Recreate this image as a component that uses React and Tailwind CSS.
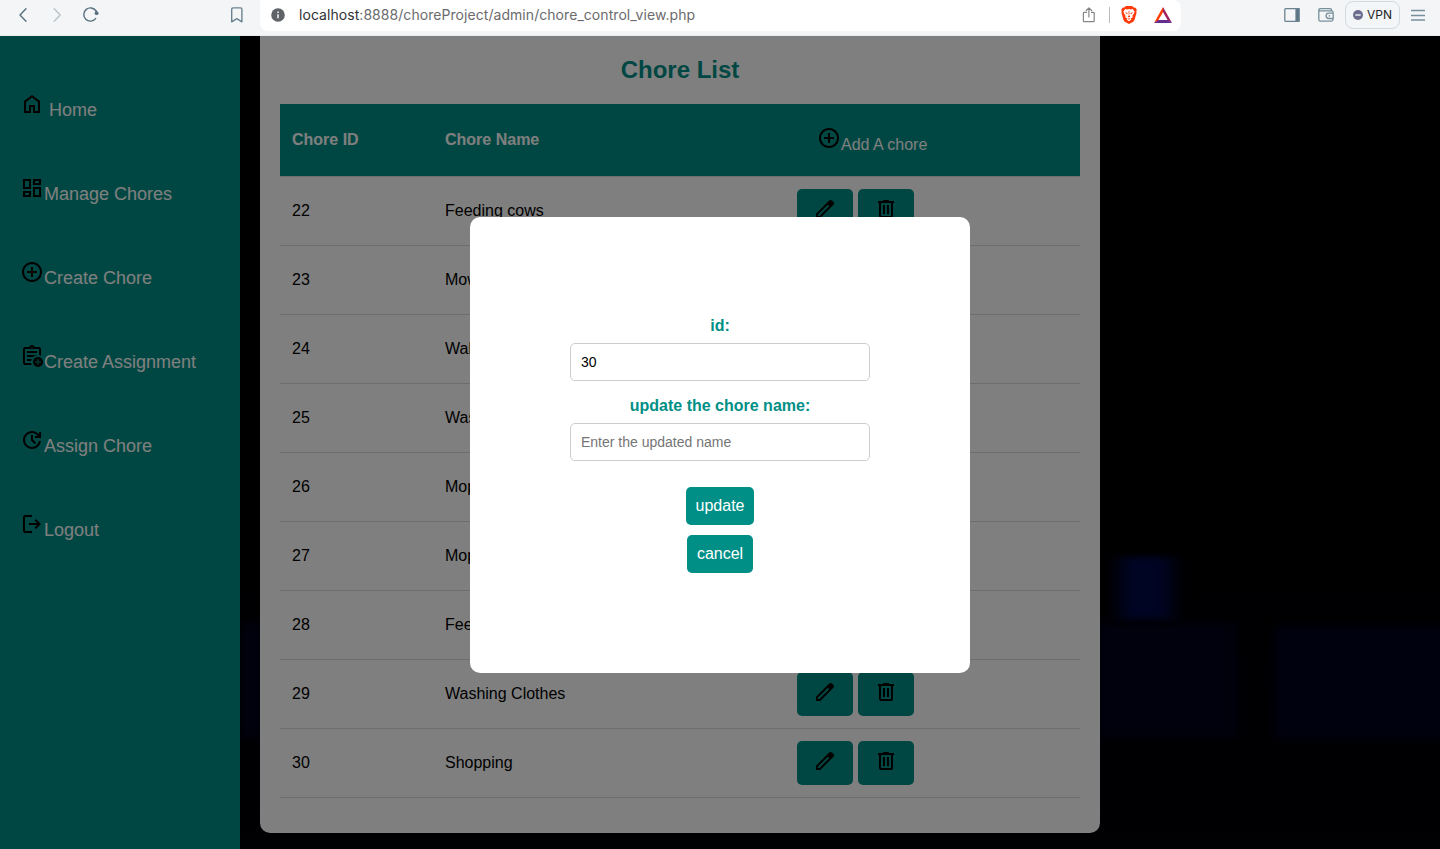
import React from "react";

const PATHS = {
  home: "M240-200h120v-240h240v240h120v-360L480-740 240-560v360Zm-80 80v-480l320-240 320 240v480H520v-240h-80v240H160Z",
  dashboard:
    "M520-600v-240h320v240H520ZM120-440v-400h320v400H120Zm400 320v-400h320v400H520Zm-400 0v-240h320v240H120Zm80-400h160v-240H200v240Zm400 320h160v-240H600v240Zm0-480h160v-80H600v80ZM200-200h160v-80H200v80Z",
  add: "M440-280h80v-160h160v-80H520v-160h-80v160H280v80h160v160Zm40 200q-83 0-156-31.5T197-197q-54-54-85.5-127T80-480q0-83 31.5-156T197-763q54-54 127-85.5T480-880q83 0 156 31.5T763-763q54 54 85.5 127T880-480q0 83-31.5 156T763-197q-54 54-127 85.5T480-80Zm0-80q134 0 227-93t93-227q0-134-93-227t-227-93q-134 0-227 93t-93 227q0 134 93 227t227 93Z",
  assignment:
    "M200-120q-33 0-56.5-23.5T120-200v-560q0-33 23.5-56.5T200-840h168q13-36 43.5-58t68.5-22q38 0 68.5 22t43.5 58h168q33 0 56.5 23.5T840-760v268q-19-9-39-15.5t-41-9.5v-243H200v560h242q3 22 9.5 42t15.5 38H200Zm80-160h163q3-21 9.5-41t14.5-39H280v80Zm0-160h244q32-30 71.5-50t84.5-27v-3H280v80Zm0-160h400v-80H280v80Zm200-190q13 0 21.5-8.5T510-820q0-13-8.5-21.5T480-850q-13 0-21.5 8.5T450-820q0 13 8.5 21.5T480-790ZM720-40q-83 0-141.5-58.5T520-240q0-83 58.5-141.5T720-440q83 0 141.5 58.5T920-240q0 83-58.5 141.5T720-40Zm-20-80h40v-100h100v-40H740v-100h-40v100H600v40h100v100Z",
  update:
    "M480-120q-75 0-140.5-28.5t-114-77q-48.5-48.5-77-114T120-480q0-75 28.5-140.5t77-114q48.5-48.5 114-77T480-840q82 0 155.5 35T760-706v-94h80v240H600v-80h110q-41-56-101-88t-129-32q-117 0-198.5 81.5T200-480q0 117 81.5 198.5T480-200q105 0 183.5-68T756-440h82q-15 137-117.5 228.5T480-120Zm112-192L440-464v-216h80v184l128 128-56 56Z",
  logout:
    "M200-120q-33 0-56.5-23.5T120-200v-560q0-33 23.5-56.5T200-840h280v80H200v560h280v80H200Zm440-160-55-58 102-102H360v-80h327L585-622l55-58 200 200-200 200Z",
  edit: "M200-200h57l391-391-57-57-391 391v57Zm-80 80v-170l528-527q12-11 26.5-17t30.5-6q16 0 31 6t26 18l55 56q12 11 17.5 26t5.5 30q0 16-5.5 30.5T817-647L290-120H120Z",
  trash:
    "M280-120q-33 0-56.5-23.5T200-200v-520h-40v-80h200v-40h240v40h200v80h-40v520q0 33-23.5 56.5T680-120H280Zm400-600H280v520h400v-520ZM360-280h80v-360h-80v360Zm160 0h80v-360h-80v360ZM280-720v520-520Z",
};

function Symbol({ name }) {
  return (
    <svg viewBox="0 -960 960 960" className="h-6 w-6 shrink-0 fill-black">
      <path d={PATHS[name]} />
    </svg>
  );
}

const NAV = [
  ["home", "Home"],
  ["dashboard", "Manage Chores"],
  ["add", "Create Chore"],
  ["assignment", "Create Assignment"],
  ["update", "Assign Chore"],
  ["logout", "Logout"],
];

const CHORES = [
  [22, "Feeding cows"],
  [23, "Mowing"],
  [24, "Walking dog"],
  [25, "Washing car"],
  [26, "Mopping"],
  [27, "Mopping"],
  [28, "Feeding"],
  [29, "Washing Clothes"],
  [30, "Shopping"],
];

function BrowserBar() {
  return (
    <header className="flex h-9 shrink-0 items-start border-b border-[#e9ebed] bg-[#f3f5f7] font-[Inter,sans-serif]">
      <div className="flex w-[260px] shrink-0 items-center pl-4 pt-[7px]">
        <svg viewBox="0 0 16 16" className="h-4 w-4" fill="none" stroke="#56717f" strokeWidth="1.4" strokeLinecap="round" strokeLinejoin="round">
          <path d="M10 1.7 4 8l6 6.3" />
        </svg>
        <svg viewBox="0 0 16 16" className="ml-[17px] h-4 w-4" fill="none" stroke="#b9c4ca" strokeWidth="1.4" strokeLinecap="round" strokeLinejoin="round">
          <path d="M5.2 1.7 11.2 8l-6 6.3" />
        </svg>
        <svg viewBox="0 0 16 16" className="ml-[18px] h-4 w-4" fill="none" stroke="#56717f" strokeWidth="1.4" strokeLinecap="round">
          <path d="M12.6 11.6A6.600 6.600 0 1 1 13 4" />
          <circle cx="13.600" cy="6.200" r="1.900" fill="#56717f" stroke="none" />
          <path d="M14 6 12.700 3.400" />
        </svg>
        <svg viewBox="0 0 16 16" className="ml-[130px] h-4 w-4" fill="none" stroke="#6b8390" strokeWidth="1.4" strokeLinejoin="round">
          <path d="M2.7 2.2Q2.7.9 4 .9h7.600q1.300 0 1.300 1.300v12.600L7.800 11.600l-5.100 3.200Z" />
        </svg>
      </div>
      <div className="flex h-[31px] w-[921px] shrink-0 items-center rounded-b-lg rounded-tr-lg bg-white pb-px pl-[11px]">
        <svg viewBox="0 0 14 14" className="h-3.5 w-3.5">
          <circle cx="7" cy="7" r="6.800" fill="#5f6368" />
          <path d="M6.300 6.300h1.400v4H6.300zM6.300 3.500h1.400V5H6.300z" fill="#fff" />
        </svg>
        <div className="ml-3.5 w-[783px] whitespace-nowrap text-[14px] leading-5 tracking-[0.055px] text-[#6b6b6d]">
          <span className="text-[#303134]">localhost</span>:8888/choreProject/admin/chore_control_view.php
        </div>
        <svg viewBox="0 0 14 16" className="h-4 w-3.5" fill="none" stroke="#858585" strokeWidth="1.2" strokeLinecap="round" strokeLinejoin="round">
          <path d="M4.500 5.400H2.200q-.8 0-.8.8v7.700q0 .8.8.8h9.200q.8 0 .8-.8V6.200q0-.8-.8-.8H9.500M6.900 10V1M4.200 3.500 6.900.9l2.700 2.600" />
        </svg>
        <div className="ml-[13px] h-4 w-px bg-[#b8bcc0]" />
        <svg viewBox="0 0 16 18" className="ml-[11px] h-[18px] w-4">
          <path d="M4.800 0h6.400l1.600 1.500 1.700.2 1.300 2-.5 1.700.3 1-2 7.300q-.5 1.400-1.700 2.200L8 18l-3.900-2.100q-1.200-.8-1.700-2.200L.4 6.400l.3-1L.2 3.700l1.300-2 1.700-.2Z" fill="#ff3b0b" />
          <path d="m4.300 3 2 .4L8 3l1.700.4 2-.4 1.900 2.400-.7 2.100-1.500 2.300.3 1.500-2 1.100.7 1L8 15.200l-2.400-1.800.7-1-2-1.100.3-1.500-1.500-2.300-.7-2.100Z" fill="#fff" />
          <path d="m3.800 6.300 3 .8-.9 1.200ZM12.200 6.300l-3 .8.9 1.200ZM7.600 5h.8l-.1 4.800 1.100.6L8 11.400l-1.400-1 1.100-.6ZM6.300 12.900l1.700-.6 1.700.6-1.700.7Z" fill="#ff3b0b" />
        </svg>
        <svg viewBox="0 0 18 16" className="ml-[17px] h-4 w-[18px]">
          <path d="M9 0 0 16l4.300-2.800L9 5Z" fill="#ff3d00" />
          <path d="M9 0v5l4.700 8.200L18 16Z" fill="#9e1f63" />
          <path d="M0 16h18l-4.300-2.900H4.300Z" fill="#662d91" />
        </svg>
      </div>
      <div className="flex flex-1 items-center pl-[103px]">
        <svg viewBox="0 0 16 16" className="mt-px h-4 w-4" fill="none" stroke="#6b8390" strokeWidth="1.300">
          <rect x=".8" y="1.700" width="14.200" height="12.600" rx=".8" />
          <path d="M12 1.700h3v12.600h-3Z" fill="#56717f" />
        </svg>
        <svg viewBox="0 0 16 16" className="ml-[18px] mt-px h-4 w-4" fill="none" stroke="#78909c" strokeWidth="1.300" strokeLinejoin="round">
          <path d="M15 5.800V4.900q0-1.100-1-1.100H2.300Q.8 3.800.8 2.700q0-1.100 1.200-1.100h10.300q1.100 0 1.100 1.100v1.100M.8 2.700v9.700q0 1.700 1.700 1.700h10.800q1.700 0 1.700-1.500v-1" />
          <path d="M15.200 6.100h-4.400a2.700 2.700 0 0 0 0 5.400h4.400ZM10.600 8.800h1.600" />
        </svg>
        <div className="ml-[11px] mt-px flex h-7 w-[55px] items-center rounded-lg border border-[#d3dae0] pl-[7px] text-[12px] text-[#1d1f25]">
          <svg viewBox="0 0 10 10" className="h-2.5 w-2.5">
            <circle cx="5" cy="5" r="5" fill="#6b6d8e" />
            <path d="M2.300 4.300h5.400v1.400H2.300z" fill="#f3f5f7" />
          </svg>
          <span className="ml-1">VPN</span>
        </div>
        <svg viewBox="0 0 14 12" className="ml-[11px] mt-px h-3 w-3.5" stroke="#78909c" strokeWidth="1.300">
          <path d="M0 1.500h14M0 6.500h14M0 11h14" />
        </svg>
      </div>
    </header>
  );
}

function Sidebar() {
  return (
    <nav className="flex w-60 shrink-0 flex-col bg-[#008f86] pl-5 pt-14">
      {NAV.map(([icon, label], i) => (
        <a key={label} className="flex h-[84px] items-start text-[18px] leading-5 text-white">
          <Symbol name={icon} />
          <span className={i === 0 ? "ml-[5px] pt-2" : "pt-2"}>{label}</span>
        </a>
      ))}
    </nav>
  );
}

function ChoreList() {
  return (
    <main className="ml-5 h-[797px] w-[840px] shrink-0 rounded-b-[10px] bg-white px-5 pt-5 text-base text-black">
      <h2 className="h-12 text-center text-[24px] font-bold leading-7 text-[#008f86]">Chore List</h2>
      <div className="grid h-[73px] grid-cols-[153px_352px_1fr] items-center border-b border-[#ddd] bg-[#008f86] text-white">
        <div className="pl-3 font-bold">Chore ID</div>
        <div className="pl-3 font-bold">Chore Name</div>
        <div className="flex h-7 items-start pl-8">
          <Symbol name="add" />
          <span className="pt-[9px] leading-5">Add A chore</span>
        </div>
      </div>
      {CHORES.map(([id, name]) => (
        <div key={id} className="grid h-[69px] grid-cols-[153px_352px_1fr] items-center border-b border-[#ddd]">
          <div className="pl-3">{id}</div>
          <div className="pl-3">{name}</div>
          <div className="flex gap-[5px] pl-3">
            <button className="flex h-11 w-14 justify-center rounded-[5px] bg-[#008f86] pt-2">
              <Symbol name="edit" />
            </button>
            <button className="flex h-11 w-14 justify-center rounded-[5px] bg-[#008f86] pt-2">
              <Symbol name="trash" />
            </button>
          </div>
        </div>
      ))}
    </main>
  );
}

function UpdateDialog() {
  return (
    <div className="absolute inset-0 flex items-start justify-center bg-black/50 pt-[181px]">
      <form className="flex h-[456px] w-[500px] flex-col items-center rounded-[10px] bg-white pt-[99px] text-base leading-5 text-[#008f86]">
        <label className="font-bold">id:</label>
        <input
          readOnly
          value="30"
          className="mt-[7px] h-[38px] w-[300px] rounded-[5px] border border-[#ccc] px-2.5 text-[14px] text-black"
        />
        <label className="mt-[15px] font-bold">update the chore name:</label>
        <input
          placeholder="Enter the updated name"
          className="mt-[7px] h-[38px] w-[300px] rounded-[5px] border border-[#ccc] px-2.5 text-[14px] text-black placeholder:text-[#757575]"
        />
        <button type="button" className="mt-[26px] h-[38px] w-[68px] rounded-[5px] bg-[#008f86] text-white">
          update
        </button>
        <button type="button" className="mt-2.5 h-[38px] w-[66px] rounded-[5px] bg-[#008f86] text-white">
          cancel
        </button>
      </form>
    </div>
  );
}

/* Dim stage-light glow behind the page, drawn at full brightness under the overlay. */
function Backdrop() {
  return (
    <svg viewBox="0 0 1200 813" className="absolute inset-0 h-full w-full" preserveAspectRatio="none">
      <defs>
        <filter id="soft" x="-20%" y="-20%" width="140%" height="140%" colorInterpolationFilters="sRGB">
          <feGaussianBlur stdDeviation="5" />
        </filter>
        <filter id="glow" x="-60%" y="-30%" width="220%" height="160%" colorInterpolationFilters="sRGB">
          <feGaussianBlur stdDeviation="9 3" />
        </filter>
        <linearGradient id="floor" x1="0" y1="0" x2="0" y2="1">
          <stop offset="0" stopColor="#000" />
          <stop offset="0.6" stopColor="#000002" />
          <stop offset="0.85" stopColor="#000006" />
          <stop offset="1" stopColor="#020206" />
        </linearGradient>
      </defs>
      <rect width="1200" height="813" fill="url(#floor)" />
      <g filter="url(#soft)">
        <rect x="0" y="586" width="998" height="116" fill="#000218" />
        <rect x="1034" y="590" width="190" height="114" fill="#00021c" />
      </g>
      <rect x="880" y="521" width="52" height="62" fill="#000a48" filter="url(#glow)" />
    </svg>
  );
}

export default function App() {
  return (
    <div className="flex h-[849px] w-[1440px] flex-col overflow-hidden bg-black font-['Liberation_Sans',Arial,sans-serif]">
      <BrowserBar />
      <div className="relative flex min-h-0 flex-1">
        <Sidebar />
        <div className="relative flex flex-1 items-start">
          <Backdrop />
          <div className="relative">
            <ChoreList />
          </div>
        </div>
        <UpdateDialog />
      </div>
    </div>
  );
}
